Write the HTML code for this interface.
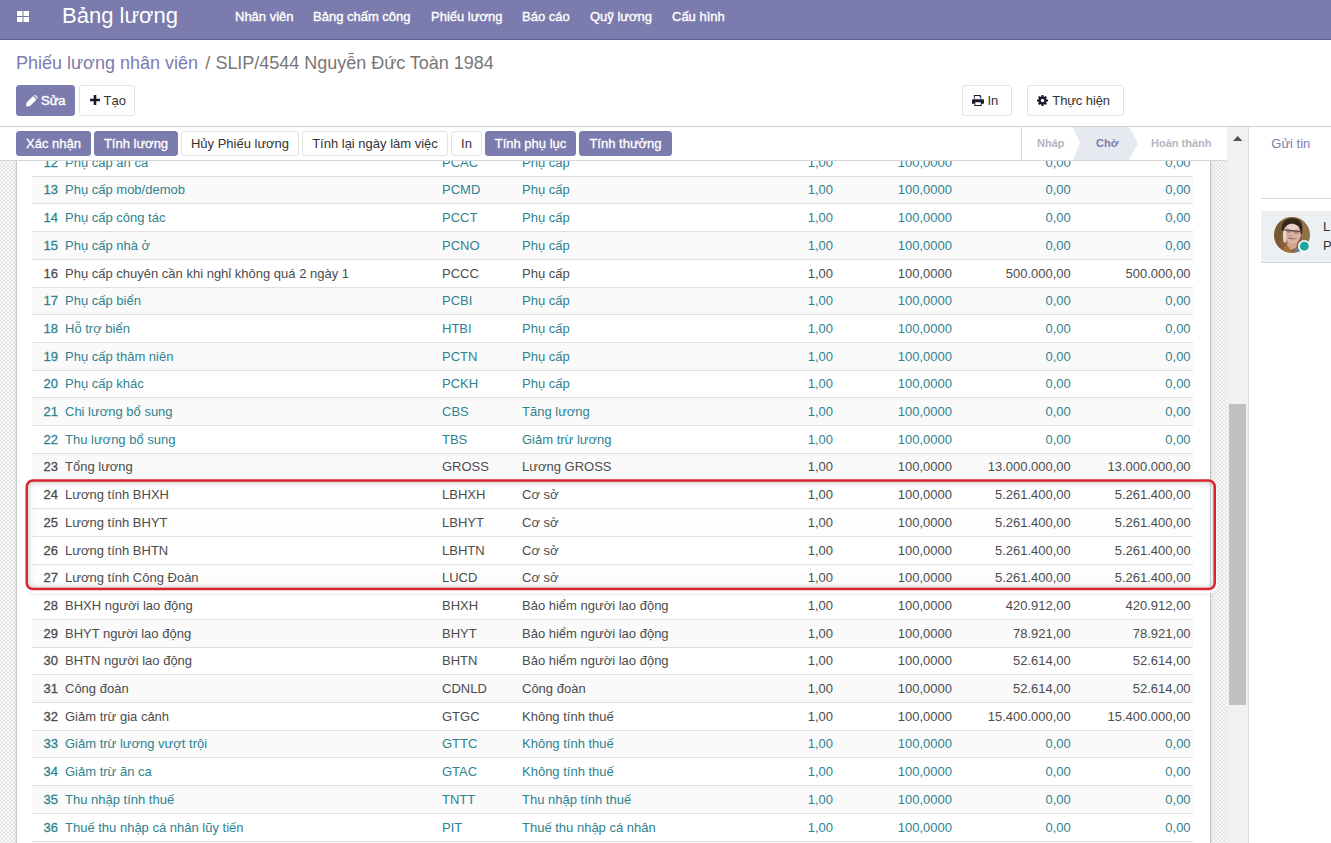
<!DOCTYPE html>
<html><head><meta charset="utf-8"><title>Odoo</title>
<style>
*{box-sizing:border-box}
html,body{margin:0;padding:0}
body{width:1331px;height:843px;overflow:hidden;position:relative;background:#fff;font-family:"Liberation Sans",sans-serif;font-size:13px;color:#4c4c4c}
#nav{position:absolute;left:0;top:0;width:1331px;height:40px;background:#7c7bad;border-bottom:1px solid #5f5e97}
#nav .brand{position:absolute;left:62px;top:3px;font-size:22px;line-height:26px;color:#fff;white-space:nowrap}
#nav .m{position:absolute;top:9px;font-size:13px;line-height:15px;color:#fff;white-space:nowrap;-webkit-text-stroke:0.35px #fff}
#nav svg{position:absolute;left:17px;top:10.5px}
#bc{position:absolute;left:16px;top:52px;font-size:18px;line-height:22px;white-space:nowrap;color:#777}
#bc a{color:#7c7bad}
.btn{position:absolute;height:31px;border-radius:3px;font-size:13px;line-height:29px;white-space:nowrap;border:1px solid #e3e3e3;background:#fff;color:#333}
.btn.p{background:#7c7bad;border-color:#7c7bad;color:#fff;-webkit-text-stroke:0.45px #fff}
.sb{position:absolute;top:4px;height:25px;border-radius:3px;font-size:13px;line-height:23px;text-align:center;white-space:nowrap;border:1px solid #e2e2e2;background:#fff;color:#333}
.sb.p{background:#7c7bad;border-color:#7c7bad;color:#fff;-webkit-text-stroke:0.3px #fff}
#cpline{position:absolute;left:0;top:126px;width:1331px;height:1px;background:#cfcfcf}
#content{position:absolute;left:0;top:161px;width:1227px;height:682px;overflow:hidden;
 background-color:#fcfcfc;background-image:conic-gradient(#e1e1e1 25%,#fcfcfc 0 50%,#e1e1e1 0 75%,#fcfcfc 0);background-size:4px 4px;background-position:3px 0.6px}
#sheet{position:absolute;left:16px;top:-5px;width:1195px;height:700px;background:#fff;border:1px solid #c8c8c8;box-shadow:0 0 3px rgba(0,0,0,.12)}
.r{position:absolute;left:32px;width:1161px;height:27.7px;border-top:1px solid #dfdfdf;line-height:18px;color:#4c4c4c}
.r.s{background:#fafafa}
.r.s.w{background:#fdfdfd}
.r.i{color:#2f8290}
.r span,.r b{position:absolute;top:4.8px;white-space:nowrap}
.r .n{left:11.5px;font-weight:normal;-webkit-text-stroke:0.3px}
.r .nm{left:33px}
.r .cd{left:410px}
.r .ct{left:490px}
.r .q{right:360px}
.r .rt{right:241px}
.r .am{right:122.2px}
.r .tt{right:2.4px}
#status{position:absolute;left:0;top:127px;width:1227px;height:34px;background:#fff;border-bottom:1px solid #d6d6d6}
#chat{position:absolute;left:1249px;top:127px;width:82px;height:716px;background:#fff}
#sbar{position:absolute;left:1227px;top:127px;width:22px;height:716px;background:#f1f1f1;border-right:1px solid #dadada}
#thumb{position:absolute;left:2px;top:277px;width:17px;height:301px;background:#c1c1c1}
#red{position:absolute;left:27px;top:481px;width:1188px;height:108px;border-radius:5px;box-shadow:inset 0 0 6px rgba(0,0,0,.38),0 2px 1px 2px #fff,0 6px 4px 0 rgba(0,0,0,.07)}
#redsvg{position:absolute;left:0;top:0}
</style></head><body>

<div id="nav">
<svg width="12" height="11" viewBox="0 0 12 11"><rect x="0" y="0" width="5.5" height="5" fill="#fff"/><rect x="6.5" y="0" width="5.5" height="5" fill="#fff"/><rect x="0" y="6" width="5.5" height="5" fill="#fff"/><rect x="6.5" y="6" width="5.5" height="5" fill="#fff"/></svg>
<div class="brand">Bảng lương</div>
<div class="m" style="left:235px">Nhân viên</div>
<div class="m" style="left:313px">Bảng chấm công</div>
<div class="m" style="left:431px">Phiếu lương</div>
<div class="m" style="left:522px">Báo cáo</div>
<div class="m" style="left:590px">Quỹ lương</div>
<div class="m" style="left:672px">Cấu hình</div>
</div>

<div id="bc"><a>Phiếu lương nhân viên</a><span style="margin:0 0.2px 0 7.2px">/</span> <span style="letter-spacing:-0.02px">SLIP/4544 Nguyễn Đức Toàn 1984</span></div>

<div class="btn p" style="left:16px;top:85px;width:59px"><svg style="position:absolute;left:9px;top:9px" width="12" height="12" viewBox="0 0 12 12"><path d="M0 11.6 L0.6 7.6 L7.2 1 L10.6 4.4 L4 11 Z M8 0.3 L8.9 -0.4 L12 2.7 L11.4 3.6 Z" fill="#fff"/></svg><span style="position:absolute;left:24px">Sửa</span></div>
<div class="btn" style="left:79px;top:85px;width:56px"><svg style="position:absolute;left:10px;top:9.2px" width="10" height="10" viewBox="0 0 10 10"><path d="M3.7 0h2.6v3.7h3.7v2.6h-3.7v3.7h-2.6v-3.7h-3.7v-2.6h3.7z" fill="#1a1a2a"/></svg><span style="position:absolute;left:23.5px">Tạo</span></div>
<div class="btn" style="left:962px;top:85px;width:50px"><svg style="position:absolute;left:9px;top:9px" width="12" height="11" viewBox="0 0 13 12"><path d="M3 0h6l1 1v3h-1v-2.5h-1.5v-0.5h-4.5v3h-1v-4z M1 4.5h11a1 1 0 0 1 1 1v4h-2.5v2.5h-8v-2.5h-2.5v-4a1 1 0 0 1 1-1z M3.5 8v3h6v-3z" fill="#1a1a2a" fill-rule="evenodd"/></svg><span style="position:absolute;left:24.5px">In</span></div>
<div class="btn" style="left:1027px;top:85px;width:97px"><svg style="position:absolute;left:9.3px;top:8.5px" width="11" height="11" viewBox="0 0 12 12"><circle cx="6" cy="6" r="3.3" fill="none" stroke="#1a1a2a" stroke-width="2.6"/><g stroke="#1a1a2a" stroke-width="2.2"><path d="M6 0v12M0 6h12M1.8 1.8l8.4 8.4M10.2 1.8l-8.4 8.4"/></g><circle cx="6" cy="6" r="1.8" fill="#fff"/></svg><span style="position:absolute;left:24.3px;letter-spacing:-0.1px">Thực hiện</span></div>

<div id="cpline"></div>

<div id="content">
<div id="sheet"></div>
<div style="position:absolute;left:27px;top:320px;width:1188px;height:108px;background:#fff;border-radius:5px"></div>
<div style="position:absolute;left:1210px;top:322px;width:1px;height:104px;background:#ccd4d2"></div>
<div class="r i" style="top:-13.00px"><b class="n">12</b><span class="nm">Phụ cấp ăn ca</span><span class="cd">PCAC</span><span class="ct">Phụ cấp</span><span class="q">1,00</span><span class="rt">100,0000</span><span class="am">0,00</span><span class="tt">0,00</span></div>
<div class="r i s" style="top:14.70px"><b class="n">13</b><span class="nm">Phụ cấp mob/demob</span><span class="cd">PCMD</span><span class="ct">Phụ cấp</span><span class="q">1,00</span><span class="rt">100,0000</span><span class="am">0,00</span><span class="tt">0,00</span></div>
<div class="r i" style="top:42.40px"><b class="n">14</b><span class="nm">Phụ cấp công tác</span><span class="cd">PCCT</span><span class="ct">Phụ cấp</span><span class="q">1,00</span><span class="rt">100,0000</span><span class="am">0,00</span><span class="tt">0,00</span></div>
<div class="r i s" style="top:70.10px"><b class="n">15</b><span class="nm">Phụ cấp nhà ở</span><span class="cd">PCNO</span><span class="ct">Phụ cấp</span><span class="q">1,00</span><span class="rt">100,0000</span><span class="am">0,00</span><span class="tt">0,00</span></div>
<div class="r" style="top:97.80px"><b class="n">16</b><span class="nm">Phụ cấp chuyên cần khi nghỉ không quá 2 ngày 1</span><span class="cd">PCCC</span><span class="ct">Phụ cấp</span><span class="q">1,00</span><span class="rt">100,0000</span><span class="am">500.000,00</span><span class="tt">500.000,00</span></div>
<div class="r i s" style="top:125.50px"><b class="n">17</b><span class="nm">Phụ cấp biển</span><span class="cd">PCBI</span><span class="ct">Phụ cấp</span><span class="q">1,00</span><span class="rt">100,0000</span><span class="am">0,00</span><span class="tt">0,00</span></div>
<div class="r i" style="top:153.20px"><b class="n">18</b><span class="nm">Hỗ trợ biển</span><span class="cd">HTBI</span><span class="ct">Phụ cấp</span><span class="q">1,00</span><span class="rt">100,0000</span><span class="am">0,00</span><span class="tt">0,00</span></div>
<div class="r i s" style="top:180.90px"><b class="n">19</b><span class="nm">Phụ cấp thâm niên</span><span class="cd">PCTN</span><span class="ct">Phụ cấp</span><span class="q">1,00</span><span class="rt">100,0000</span><span class="am">0,00</span><span class="tt">0,00</span></div>
<div class="r i" style="top:208.60px"><b class="n">20</b><span class="nm">Phụ cấp khác</span><span class="cd">PCKH</span><span class="ct">Phụ cấp</span><span class="q">1,00</span><span class="rt">100,0000</span><span class="am">0,00</span><span class="tt">0,00</span></div>
<div class="r i s" style="top:236.30px"><b class="n">21</b><span class="nm">Chi lương bổ sung</span><span class="cd">CBS</span><span class="ct">Tăng lương</span><span class="q">1,00</span><span class="rt">100,0000</span><span class="am">0,00</span><span class="tt">0,00</span></div>
<div class="r i" style="top:264.00px"><b class="n">22</b><span class="nm">Thu lương bổ sung</span><span class="cd">TBS</span><span class="ct">Giảm trừ lương</span><span class="q">1,00</span><span class="rt">100,0000</span><span class="am">0,00</span><span class="tt">0,00</span></div>
<div class="r s" style="top:291.70px"><b class="n">23</b><span class="nm">Tổng lương</span><span class="cd">GROSS</span><span class="ct">Lương GROSS</span><span class="q">1,00</span><span class="rt">100,0000</span><span class="am">13.000.000,00</span><span class="tt">13.000.000,00</span></div>
<div class="r" style="top:319.40px"><b class="n">24</b><span class="nm">Lương tính BHXH</span><span class="cd">LBHXH</span><span class="ct">Cơ sở</span><span class="q">1,00</span><span class="rt">100,0000</span><span class="am">5.261.400,00</span><span class="tt">5.261.400,00</span></div>
<div class="r s w" style="top:347.10px"><b class="n">25</b><span class="nm">Lương tính BHYT</span><span class="cd">LBHYT</span><span class="ct">Cơ sở</span><span class="q">1,00</span><span class="rt">100,0000</span><span class="am">5.261.400,00</span><span class="tt">5.261.400,00</span></div>
<div class="r" style="top:374.80px"><b class="n">26</b><span class="nm">Lương tính BHTN</span><span class="cd">LBHTN</span><span class="ct">Cơ sở</span><span class="q">1,00</span><span class="rt">100,0000</span><span class="am">5.261.400,00</span><span class="tt">5.261.400,00</span></div>
<div class="r s w" style="top:402.50px"><b class="n">27</b><span class="nm">Lương tính Công Đoàn</span><span class="cd">LUCD</span><span class="ct">Cơ sở</span><span class="q">1,00</span><span class="rt">100,0000</span><span class="am">5.261.400,00</span><span class="tt">5.261.400,00</span></div>
<div class="r" style="top:430.20px"><b class="n">28</b><span class="nm">BHXH người lao động</span><span class="cd">BHXH</span><span class="ct">Bảo hiểm người lao động</span><span class="q">1,00</span><span class="rt">100,0000</span><span class="am">420.912,00</span><span class="tt">420.912,00</span></div>
<div class="r s" style="top:457.90px"><b class="n">29</b><span class="nm">BHYT người lao động</span><span class="cd">BHYT</span><span class="ct">Bảo hiểm người lao động</span><span class="q">1,00</span><span class="rt">100,0000</span><span class="am">78.921,00</span><span class="tt">78.921,00</span></div>
<div class="r" style="top:485.60px"><b class="n">30</b><span class="nm">BHTN người lao động</span><span class="cd">BHTN</span><span class="ct">Bảo hiểm người lao động</span><span class="q">1,00</span><span class="rt">100,0000</span><span class="am">52.614,00</span><span class="tt">52.614,00</span></div>
<div class="r s" style="top:513.30px"><b class="n">31</b><span class="nm">Công đoàn</span><span class="cd">CDNLD</span><span class="ct">Công đoàn</span><span class="q">1,00</span><span class="rt">100,0000</span><span class="am">52.614,00</span><span class="tt">52.614,00</span></div>
<div class="r" style="top:541.00px"><b class="n">32</b><span class="nm">Giảm trừ gia cảnh</span><span class="cd">GTGC</span><span class="ct">Không tính thuế</span><span class="q">1,00</span><span class="rt">100,0000</span><span class="am">15.400.000,00</span><span class="tt">15.400.000,00</span></div>
<div class="r i s" style="top:568.70px"><b class="n">33</b><span class="nm">Giảm trừ lương vượt trội</span><span class="cd">GTTC</span><span class="ct">Không tính thuế</span><span class="q">1,00</span><span class="rt">100,0000</span><span class="am">0,00</span><span class="tt">0,00</span></div>
<div class="r i" style="top:596.40px"><b class="n">34</b><span class="nm">Giảm trừ ăn ca</span><span class="cd">GTAC</span><span class="ct">Không tính thuế</span><span class="q">1,00</span><span class="rt">100,0000</span><span class="am">0,00</span><span class="tt">0,00</span></div>
<div class="r i s" style="top:624.10px"><b class="n">35</b><span class="nm">Thu nhập tính thuế</span><span class="cd">TNTT</span><span class="ct">Thu nhập tính thuế</span><span class="q">1,00</span><span class="rt">100,0000</span><span class="am">0,00</span><span class="tt">0,00</span></div>
<div class="r i" style="top:651.80px"><b class="n">36</b><span class="nm">Thuế thu nhập cá nhân lũy tiến</span><span class="cd">PIT</span><span class="ct">Thuế thu nhập cá nhân</span><span class="q">1,00</span><span class="rt">100,0000</span><span class="am">0,00</span><span class="tt">0,00</span></div>
<div class="r i s" style="top:679.50px"><b class="n">37</b><span class="nm"></span><span class="cd"></span><span class="ct"></span><span class="q"></span><span class="rt"></span><span class="am"></span><span class="tt"></span></div>
</div>

<div id="status">
<div class="sb p" style="left:16px;width:75px">Xác nhận</div>
<div class="sb p" style="left:94px;width:84px">Tính lương</div>
<div class="sb" style="left:181px;width:118px">Hủy Phiếu lương</div>
<div class="sb" style="left:302px;width:146px">Tính lại ngày làm việc</div>
<div class="sb" style="left:451px;width:31px">In</div>
<div class="sb p" style="left:485px;width:91px">Tính phụ lục</div>
<div class="sb p" style="left:579px;width:93px">Tính thưởng</div>
<svg style="position:absolute;left:1021px;top:0" width="206" height="33" viewBox="0 0 206 33">
<rect x="0" y="0" width="206" height="33" fill="#fff"/>
<path d="M52 0H108L117 16.5L108 33H52L59 16.5Z" fill="#e7e9f0"/>
<rect x="0" y="0" width="1" height="33" fill="#dcdcdc"/>
</svg>
<div style="position:absolute;left:1037px;top:10px;font-size:11px;line-height:13px;font-weight:bold;color:#b3b5c2">Nháp</div>
<div style="position:absolute;left:1096px;top:10px;font-size:11px;line-height:13px;font-weight:bold;color:#7c7bad">Chờ</div>
<div style="position:absolute;left:1151px;top:10px;font-size:11px;line-height:13px;font-weight:bold;color:#b3b5c2">Hoàn thành</div>
</div>

<div id="sbar"><svg style="position:absolute;left:6px;top:9.3px" width="9.4" height="5" viewBox="0 0 9.4 5"><path d="M0 5L4.7 0L9.4 5Z" fill="#505050"/></svg><div id="thumb"></div></div>

<div id="chat">
<div style="position:absolute;left:22.3px;top:8.6px;font-size:13px;line-height:15px;color:#7c7bad;white-space:nowrap">Gửi tin</div>
<div style="position:absolute;left:12px;top:71px;width:70px;height:1px;background:#d9d9d9"></div>
<div style="position:absolute;left:12px;top:84px;width:70px;height:52px;background:#edf0f2;border-bottom:1px solid #d5d8da"></div>
<svg style="position:absolute;left:25px;top:89.9px" width="44" height="40" viewBox="0 0 44 40">
<defs><clipPath id="av"><circle cx="18" cy="18" r="18"/></clipPath><filter id="bl" x="-10%" y="-10%" width="120%" height="120%"><feGaussianBlur stdDeviation="0.7"/></filter></defs>
<g clip-path="url(#av)"><g filter="url(#bl)">
<rect x="-2" y="-2" width="40" height="40" fill="#80623b"/>
<rect x="-2" y="-2" width="9" height="40" fill="#6d5132" opacity=".55"/>
<rect x="28" y="4" width="10" height="22" fill="#a08252" opacity=".5"/>
<path d="M5 38C5 29 9 26.5 14 25L22 27L27 30L27 38Z" fill="#8c5c30"/>
<path d="M9 38C9 31 11 28 14 27L18 34L22 38Z" fill="#a8713a"/>
<path d="M20.5 33L24.5 29L25 38L20 38Z" fill="#6a819c"/>
<path d="M14 22L24 24L22 31L17 33L13 28Z" fill="#d1a48c"/>
<ellipse cx="18.3" cy="15.5" rx="8.8" ry="11.3" fill="#dcb2a0" transform="rotate(-6 18 15.5)"/>
<ellipse cx="19" cy="9.5" rx="6" ry="3.6" fill="#ecd3c9" transform="rotate(-4 19 9.5)"/>
<path d="M9.5 25C8.5 19 9 14 10.5 11L12.5 12C11.5 16 11.5 21 12.5 26Z" fill="#f0e6e2" opacity=".85"/>
<path d="M7.5 13.5C6.5 5.5 12 1.2 18.5 1.3C25.5 1.4 30 6 28 16.5L26.5 17C26.8 11.5 24.5 8.2 20.5 7.2C15.5 6 11.5 7.8 9.8 13.8Z" fill="#35271f"/>
<path d="M10.5 12.8L26.3 14.6" stroke="#4f3f3a" stroke-width="1.3" fill="none"/>
<ellipse cx="14.8" cy="14.3" rx="2.6" ry="1.7" fill="#7a5d55" opacity=".55"/>
<ellipse cx="22.3" cy="15.2" rx="2.6" ry="1.7" fill="#7a5d55" opacity=".55"/>
<path d="M13.6 20.3C16 23.2 20.5 23.6 23.3 21C20.5 22 16.5 21.7 13.6 20.3Z" fill="#5a2f2a"/>
<path d="M15 21.2C17.5 22.3 20 22.3 22.3 21.3C20.3 23 17 23 15 21.2Z" fill="#f6ecea"/>
<ellipse cx="16" cy="18.5" rx="2.2" ry="1.6" fill="#c98f80" opacity=".6"/>
</g></g>
<circle cx="30.3" cy="29.2" r="6.3" fill="#eef6f6"/><circle cx="30.3" cy="29.2" r="4.4" fill="#1fa59b"/>
</svg>
<div style="position:absolute;left:74px;top:92px;font-size:13px;line-height:15px;color:#333">L</div>
<div style="position:absolute;left:74px;top:111px;font-size:13px;line-height:15px;color:#333">P</div>
</div>

<div id="red"></div>
<svg id="redsvg" width="1331" height="843" viewBox="0 0 1331 843"><rect x="26.75" y="480.55" width="1188" height="108.5" rx="6" ry="6" fill="none" stroke="#dc2430" stroke-width="2.5"/></svg>
</body></html>
